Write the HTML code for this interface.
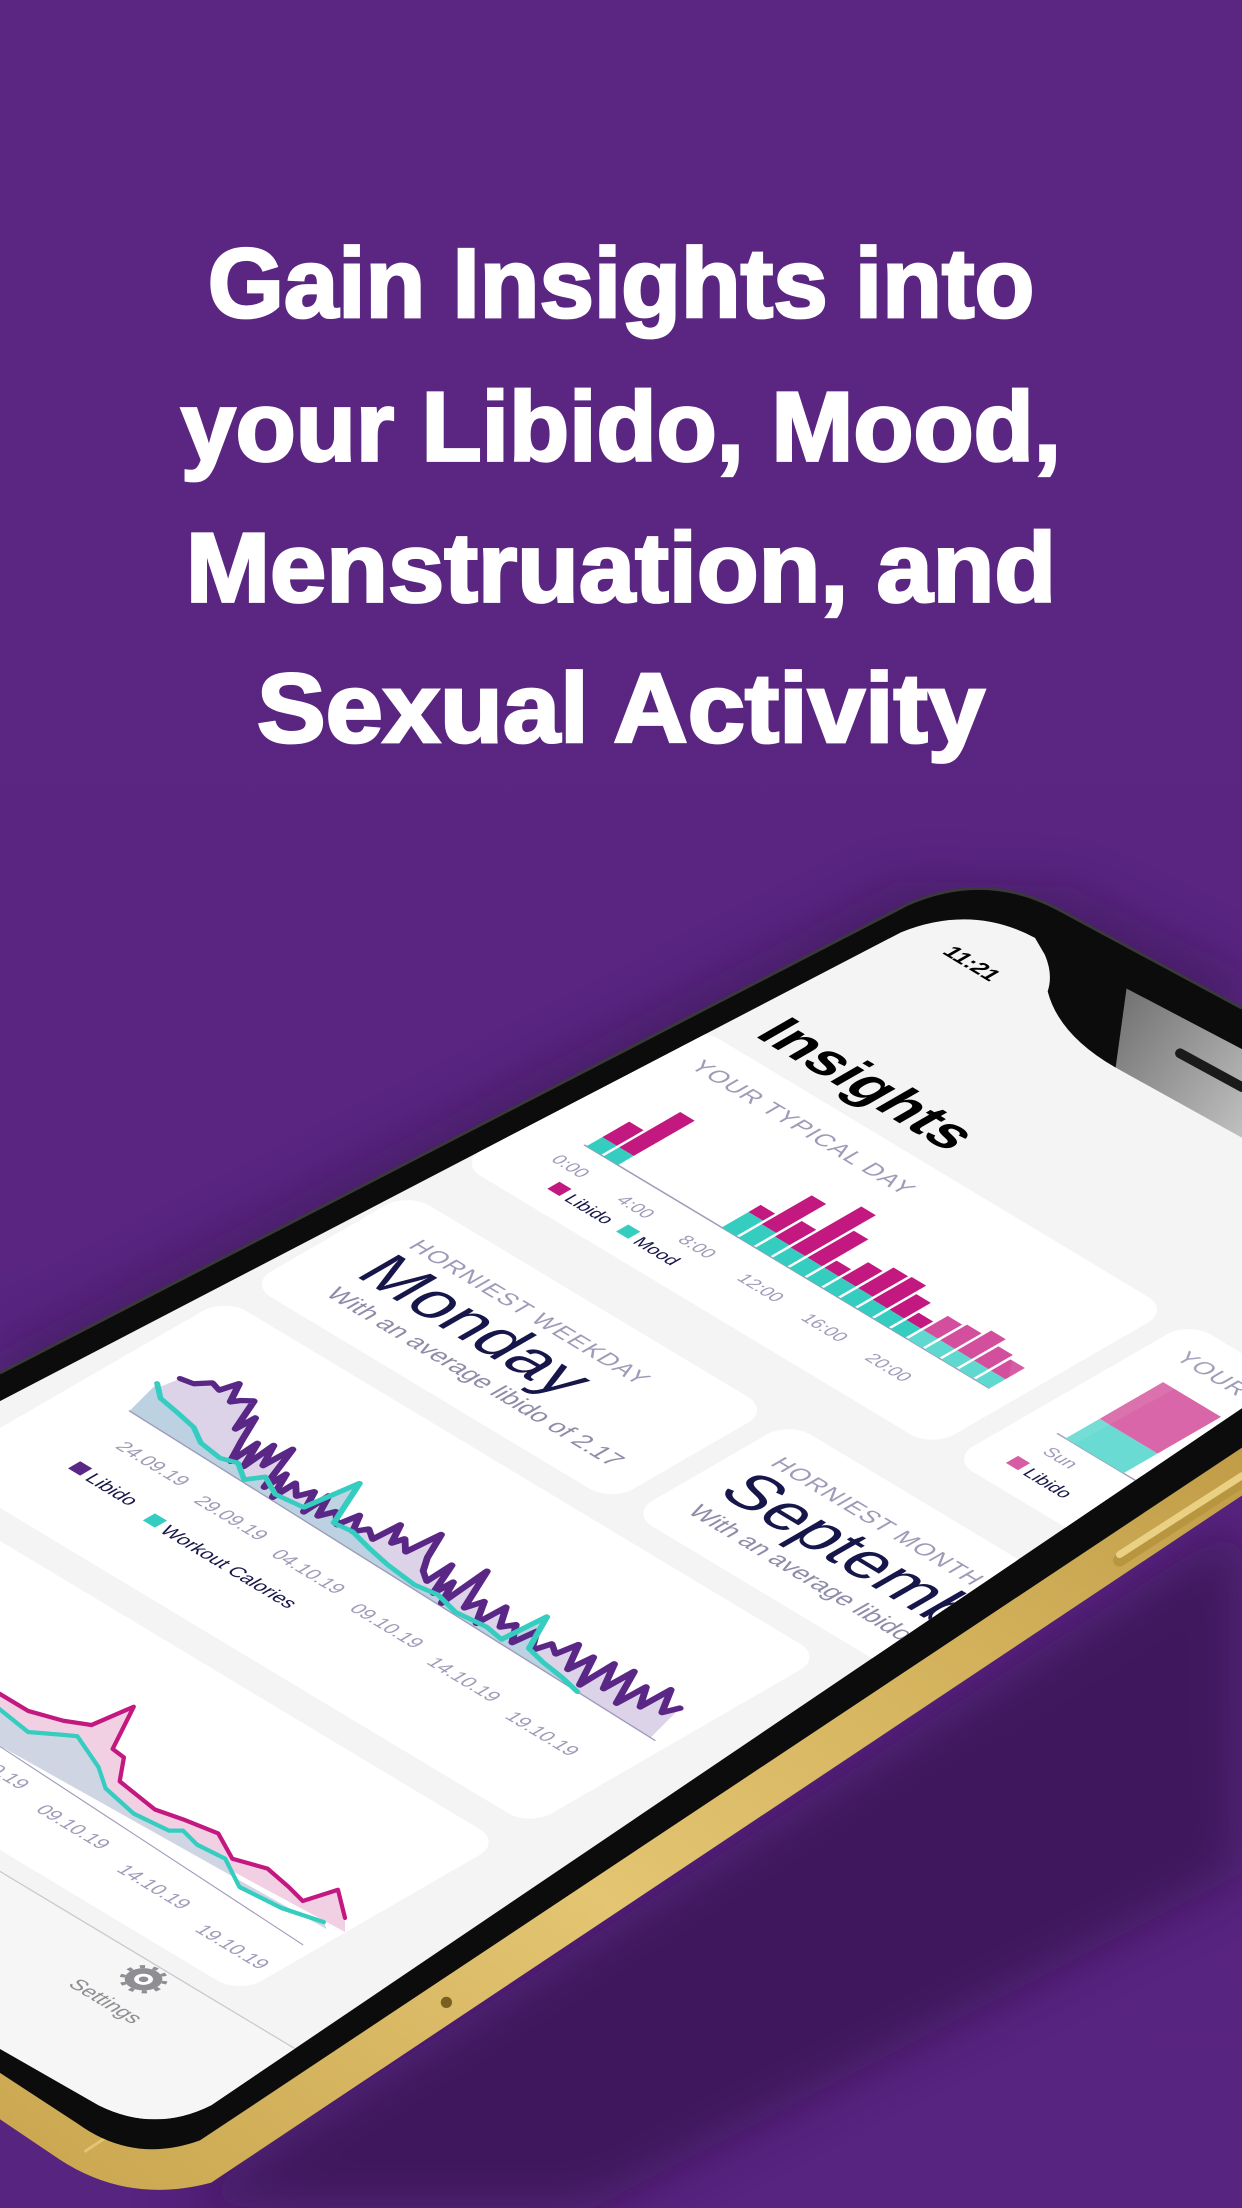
<!DOCTYPE html>
<html><head><meta charset="utf-8"><style>
html,body{margin:0;padding:0;background:#5a2581;width:1242px;height:2208px;overflow:hidden;}
svg{display:block}
</style></head><body>
<svg width="1242" height="2208" viewBox="0 0 882 1568" xmlns="http://www.w3.org/2000/svg" font-family="Liberation Sans, sans-serif">
<defs>
<linearGradient id="bg" x1="0" y1="0" x2="0" y2="1"><stop offset="0" stop-color="#5b2682"/><stop offset="1" stop-color="#57247f"/></linearGradient>
<linearGradient id="gold" x1="0" y1="1" x2="1" y2="0"><stop offset="0" stop-color="#c9a54e"/><stop offset="0.4" stop-color="#e3c572"/><stop offset="0.7" stop-color="#d2b05a"/><stop offset="1" stop-color="#b8933f"/></linearGradient>
<linearGradient id="glass" x1="0" y1="0" x2="1" y2="1"><stop offset="0" stop-color="#6e6e6e"/><stop offset="1" stop-color="#c4c4c4"/></linearGradient>
<filter id="blur" x="-20%" y="-20%" width="140%" height="140%"><feGaussianBlur stdDeviation="18"/></filter>
<clipPath id="scr"><path d="M0,995 L640,662 Q690,642 735,666 L742,678 Q748,692 744,704 Q752,735 792,758 L882,808 L882,1000 L150,1495 Q110,1515 70,1495 L0,1455 Z"/></clipPath>
</defs>
<rect width="882" height="1568" fill="url(#bg)"/>
<g fill="#fff" font-weight="bold" font-size="69.6" text-anchor="middle" stroke="#fff" stroke-width="2">
<text x="441" y="225" textLength="587" lengthAdjust="spacingAndGlyphs">Gain Insights into</text>
<text x="441" y="327" textLength="625" lengthAdjust="spacingAndGlyphs">your Libido, Mood,</text>
<text x="441" y="427" textLength="618" lengthAdjust="spacingAndGlyphs">Menstruation, and</text>
<text x="441" y="527" textLength="517" lengthAdjust="spacingAndGlyphs">Sexual Activity</text>
</g>
<path d="M120,1568 L882,1080 L882,1330 L420,1568 Z" fill="#2a0c40" opacity="0.55" filter="url(#blur)"/>
<path d="M0,960 L640,625 L760,630 L882,690 L882,740 L0,1010 Z" fill="#2a0c40" opacity="0.35" filter="url(#blur)"/>
<path d="M0,1380 L882,900 L882,1062 L150,1550 Q90,1566 40,1532 L0,1505 Z" fill="url(#gold)"/>
<path d="M60,1528 L882,985" stroke="#f0d88f" stroke-width="2" opacity="0.6"/>
<path d="M795,1108 L882,1052" stroke="#b8953f" stroke-width="9" stroke-linecap="round"/>
<path d="M795,1104 L882,1048" stroke="#e9d083" stroke-width="5" stroke-linecap="round"/>
<circle cx="317" cy="1422" r="4" fill="#7a6020"/>
<path d="M0,975 L645,642 Q700,618 752,646 L882,716 L882,1028 L142,1520 Q95,1537 55,1508 L0,1472 Z" fill="#0c0c0c"/>
<path d="M0,975 L645,642 Q700,618 752,646 L882,716" fill="none" stroke="#3a3a3a" stroke-width="2"/>
<path d="M800,702 L882,745 L882,818 L792,760 Z" fill="url(#glass)"/>
<path d="M838,748 L882,772" stroke="#1a1a1a" stroke-width="7" stroke-linecap="round"/>
<g clip-path="url(#scr)">
<rect x="0" y="600" width="882" height="968" fill="#f4f4f5"/>
<g transform="matrix(0.857 0.515 -0.866 0.5 480 745)">
<text x="40" y="-178" font-size="16" font-weight="bold" fill="#000">11:21</text>
<text x="22" y="-42" font-size="42" font-weight="bold" fill="#000">Insights</text>
<g fill="#fff">
<rect x="-8" y="-25" width="392" height="195" rx="18"/>
<rect x="400" y="-25" width="320" height="195" rx="18"/>
<rect x="-8" y="212" width="300" height="130" rx="18"/>
<rect x="308" y="212" width="320" height="130" rx="18"/>
<rect x="-8" y="362" width="495" height="240" rx="18"/>
<rect x="-8" y="625" width="495" height="215" rx="18"/>
</g>
<rect x="-200" y="855" width="900" height="300" fill="#f6f6f7"/>
<line x1="-200" y1="855" x2="700" y2="855" stroke="#c8c8cc" stroke-width="1"/>
<text x="18" y="7" font-size="17" fill="#9d9bb8" letter-spacing="1">YOUR TYPICAL DAY</text>
<line x1="30" y1="105" x2="366" y2="105" stroke="#9d9bb8" stroke-width="1.2"/>
<g>
<rect x="32" y="92" width="12" height="13" fill="#35cdc0"/><rect x="32" y="70" width="12" height="22" fill="#c2187f"/>
<rect x="46" y="92" width="12" height="13" fill="#35cdc0"/><rect x="46" y="42" width="12" height="50" fill="#c2187f"/>
<rect x="144" y="83" width="12" height="22" fill="#35cdc0"/><rect x="144" y="73" width="12" height="10" fill="#c2187f"/>
<rect x="158" y="86" width="12" height="19" fill="#35cdc0"/><rect x="158" y="45" width="12" height="41" fill="#c2187f"/>
<rect x="172" y="89" width="12" height="16" fill="#35cdc0"/><rect x="172" y="67" width="12" height="22" fill="#c2187f"/>
<rect x="186" y="90" width="12" height="15" fill="#35cdc0"/><rect x="186" y="32" width="12" height="58" fill="#c2187f"/>
<rect x="200" y="90" width="12" height="15" fill="#35cdc0"/><rect x="200" y="52" width="12" height="38" fill="#c2187f"/>
<rect x="214" y="90" width="12" height="15" fill="#35cdc0"/><rect x="214" y="80" width="12" height="10" fill="#c2187f"/>
<rect x="228" y="90" width="12" height="15" fill="#35cdc0"/><rect x="228" y="68" width="12" height="22" fill="#c2187f"/>
<rect x="242" y="90" width="12" height="15" fill="#35cdc0"/><rect x="242" y="61" width="12" height="29" fill="#c2187f"/>
<rect x="256" y="92" width="12" height="13" fill="#35cdc0"/><rect x="256" y="60" width="12" height="32" fill="#c2187f"/>
<rect x="270" y="92" width="12" height="13" fill="#35cdc0"/><rect x="270" y="70" width="12" height="22" fill="#c2187f"/>
<rect x="284" y="92" width="12" height="13" fill="#35cdc0"/><rect x="284" y="82" width="12" height="10" fill="#c2187f"/>
<rect x="298" y="92" width="12" height="13" fill="#5fd8cf"/><rect x="298" y="72" width="12" height="20" fill="#d34f9e"/>
<rect x="312" y="92" width="12" height="13" fill="#5fd8cf"/><rect x="312" y="70" width="12" height="22" fill="#d34f9e"/>
<rect x="326" y="92" width="12" height="13" fill="#5fd8cf"/><rect x="326" y="64" width="12" height="28" fill="#d34f9e"/>
<rect x="340" y="92" width="12" height="13" fill="#5fd8cf"/><rect x="340" y="72" width="12" height="20" fill="#d34f9e"/>
<rect x="354" y="92" width="12" height="13" fill="#5fd8cf"/><rect x="354" y="76" width="12" height="16" fill="#d34f9e"/>
</g>
<g font-size="13" fill="#9d9bb8">
<text x="27" y="130">0:00</text><text x="82" y="131">4:00</text><text x="135" y="133">8:00</text>
<text x="186" y="135">12:00</text><text x="240" y="136">16:00</text><text x="294" y="137">20:00</text>
</g>
<rect x="46" y="141" width="10" height="10" fill="#c2187f"/><text x="60" y="152" font-size="13" fill="#17164a">Libido</text>
<rect x="104" y="142" width="10" height="10" fill="#35cdc0"/><text x="118" y="153" font-size="13" fill="#17164a">Mood</text>
<text x="420" y="7" font-size="17" fill="#9d9bb8" letter-spacing="1">YOUR TYPICAL WEEK</text>
<line x1="425" y1="108" x2="700" y2="108" stroke="#9d9bb8" stroke-width="1.2"/>
<rect x="432" y="80" width="48" height="28" fill="#6adbd3"/><rect x="432" y="28" width="48" height="52" fill="#d866a8"/>
<text x="432" y="128" font-size="13" fill="#9d9bb8">Sun</text>
<rect x="425" y="140" width="10" height="10" fill="#d34f9e"/><text x="439" y="151" font-size="13" fill="#17164a">Libido</text>
<text x="30" y="250" font-size="17" fill="#9d9bb8" letter-spacing="1">HORNIEST WEEKDAY</text>
<text x="28" y="292" font-size="48" fill="#17164a">Monday</text>
<text x="30" y="318" font-size="18" fill="#8e8ca8">With an average libido of 2.17</text>
<text x="330" y="250" font-size="17" fill="#9d9bb8" letter-spacing="1">HORNIEST MONTH</text>
<text x="328" y="292" font-size="48" fill="#17164a">September</text>
<text x="330" y="318" font-size="18" fill="#8e8ca8">With an average libido of 2.05</text>
<g font-size="14" fill="#9d9bb8">
<text x="52" y="512">24.09.19</text><text x="122" y="517">29.09.19</text><text x="191" y="522">04.10.19</text>
<text x="261" y="527">09.10.19</text><text x="330" y="532">14.10.19</text><text x="400" y="537">19.10.19</text>
</g>
<rect x="48" y="536" width="10" height="10" fill="#5b2787"/><text x="62" y="547" font-size="14" fill="#17164a">Libido</text>
<rect x="115" y="541" width="10" height="10" fill="#35cdc0"/><text x="129" y="552" font-size="14" fill="#17164a">Workout Calories</text>
<g font-size="14" fill="#9d9bb8">
<text x="50" y="770">24.09.19</text><text x="125" y="778">29.09.19</text><text x="200" y="790">04.10.19</text>
<text x="275" y="798">09.10.19</text><text x="350" y="806">14.10.19</text><text x="424" y="815">19.10.19</text>
</g>
<g transform="translate(438,870)">
<circle r="11" fill="#8e8e93"/>
<circle r="12.5" fill="none" stroke="#8e8e93" stroke-width="3" stroke-dasharray="3 4.8"/>
<circle r="5.5" fill="#fff"/><circle r="2.8" fill="#8e8e93"/>
</g>
<text x="438" y="906" font-size="15" fill="#8e8e93" text-anchor="middle">Settings</text>
</g>
<g transform="matrix(1 0.627 -0.7 0.7 92 1002)" stroke-linejoin="round" stroke-linecap="round">
<polygon fill="#ddd3e8" points="0,0 0,-20 8,-40 16,-42 24,-50 30,-48 36,-60 40,-45 44,-50 50,-55 54,-30 58,-45 62,-25 66,-8 70,-30 74,-10 78,-35 82,-18 88,-40 92,-5 96,-22 100,-2 104,-20 110,-12 116,-22 120,-5 124,-25 128,-8 134,-18 140,-10 146,-25 150,-12 156,-20 162,-15 168,-35 172,-20 176,-28 182,-20 190,-45 194,-25 198,-15 204,-10 208,-30 212,-5 216,-20 220,-2 226,-40 232,-8 238,-20 244,-3 250,-25 256,-10 262,-18 268,-5 274,-22 280,-8 286,-20 292,-15 298,-30 304,-10 310,-28 316,-5 322,-32 328,-12 334,-35 340,-8 346,-30 352,-15 358,-38 364,-20 370,-30 370,0"/>
<polygon fill="#b9d0e0" opacity="0.92" points="0,0 0,-28 8,-20 20,-18 35,-15 45,-8 60,-6 70,-10 80,-2 88,-12 100,-5 118,-8 132,-45 138,-10 150,-12 165,-8 180,-5 200,-3 215,-6 230,-2 250,-5 262,-3 272,-35 278,-8 290,-5 305,-3 318,0"/>
<line x1="0" y1="0" x2="373" y2="0" stroke="#9d9bb8" stroke-width="1"/>
<polyline fill="none" stroke="#5b2787" stroke-width="4" points="8,-40 16,-42 24,-50 30,-48 36,-60 40,-45 44,-50 50,-55 54,-30 58,-45 62,-25 66,-8 70,-30 74,-10 78,-35 82,-18 88,-40 92,-5 96,-22 100,-2 104,-20 110,-12 116,-22 120,-5 124,-25 128,-8 134,-18 140,-10 146,-25 150,-12 156,-20 162,-15 168,-35 172,-20 176,-28 182,-20 190,-45 194,-25 198,-15 204,-10 208,-30 212,-5 216,-20 220,-2 226,-40 232,-8 238,-20 244,-3 250,-25 256,-10 262,-18 268,-5 274,-22 280,-8 286,-20 292,-15 298,-30 304,-10 310,-28 316,-5 322,-32 328,-12 334,-35 340,-8 346,-30 352,-15 358,-38 364,-20 370,-30"/>
<polyline fill="none" stroke="#35cdc0" stroke-width="3.5" points="0,-28 8,-20 20,-18 35,-15 45,-8 60,-6 70,-10 80,-2 88,-12 100,-5 118,-8 132,-45 138,-10 150,-12 165,-8 180,-5 200,-3 215,-6 230,-2 250,-5 262,-3 272,-35 278,-8 290,-5 305,-3 318,0"/>
</g>
<g stroke-linejoin="round" stroke-linecap="round">
<polygon fill="#f1d0e4" points="-5,1237 -5,1200 20,1215 45,1222 65,1225 95,1212 80,1242 88,1248 85,1265 110,1285 130,1292 155,1302 165,1320 190,1327 205,1340 215,1350 240,1342 245,1362 245,1372"/>
<polygon fill="#cfd5e2" points="-5,1237 -5,1210 20,1230 45,1232 55,1233 70,1255 75,1270 95,1288 120,1300 130,1300 140,1310 160,1320 170,1340 200,1355 230,1365 232,1370"/>
<line x1="-5" y1="1237" x2="215" y2="1381" stroke="#9d9bb8" stroke-width="0.8"/>
<polyline fill="none" stroke="#c2187f" stroke-width="3" points="-5,1200 20,1215 45,1222 65,1225 95,1212 80,1242 88,1248 85,1265 110,1285 130,1292 155,1302 165,1320 190,1327 205,1340 215,1350 240,1342 245,1362"/>
<polyline fill="none" stroke="#35cdc0" stroke-width="3" points="-5,1210 20,1230 45,1232 55,1233 70,1255 75,1270 95,1288 120,1300 130,1300 140,1310 160,1320 170,1340 200,1355 230,1365"/>
</g>
<path d="M760,760 L882,700 L882,960 L700,1060 Z" fill="#fff" opacity="0.08"/>
</g>
</svg>
</body></html>
